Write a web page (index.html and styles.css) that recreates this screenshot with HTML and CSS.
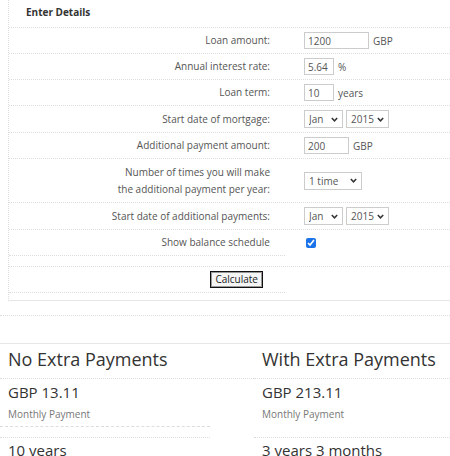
FILE: index.html
```html
<!DOCTYPE html>
<html>
<head>
<meta charset="utf-8">
<link rel="stylesheet" href="styles.css">
</head>
<body>
<div class="form-box">
  <div class="form-title">Enter Details</div>
  <div class="row">
    <div class="label">Loan amount:</div>
    <div class="field"><input class="txt w64" value="1200"><span class="unit">GBP</span></div>
  </div>
  <div class="row">
    <div class="label">Annual interest rate:</div>
    <div class="field"><input class="txt w30" value="5.64"><span class="unit">%</span></div>
  </div>
  <div class="row">
    <div class="label">Loan term:</div>
    <div class="field"><input class="txt w30" value="10"><span class="unit">years</span></div>
  </div>
  <div class="row r27">
    <div class="label">Start date of mortgage:</div>
    <div class="field"><select class="sel w39"><option>Jan</option></select><select class="sel w43"><option>2015</option></select></div>
  </div>
  <div class="row">
    <div class="label">Additional payment amount:</div>
    <div class="field"><input class="txt w45" value="200"><span class="unit">GBP</span></div>
  </div>
  <div class="row tall">
    <div class="label">Number of times you will make<br>the additional payment per year:</div>
    <div class="field"><select class="sel w58"><option>1 time</option></select></div>
  </div>
  <div class="row r27">
    <div class="label">Start date of additional payments:</div>
    <div class="field"><select class="sel w39"><option>Jan</option></select><select class="sel w43"><option>2015</option></select></div>
  </div>
  <div class="row noline">
    <div class="label lined">Show balance schedule</div>
    <div class="field"><input type="checkbox" class="chk" checked></div>
  </div>
  <div class="spacer"></div>
  <div class="row noline btnrow">
    <div class="label lined"><button class="calc">Calculate</button></div>
    <div class="field"></div>
  </div>
</div>
<div class="gap-line"></div>
<div class="results">
  <div class="col left">
    <h2 class="res-title">No Extra Payments</h2>
    <div class="res-block">
      <div class="amount">GBP 13.11</div>
      <div class="caption">Monthly Payment</div>
    </div>
    <div class="short-line"></div>
    <div class="amount term">10 years</div>
  </div>
  <div class="col right">
    <h2 class="res-title">With Extra Payments</h2>
    <div class="res-block">
      <div class="amount">GBP 213.11</div>
      <div class="caption">Monthly Payment</div>
    </div>
    <div class="short-line"></div>
    <div class="amount term">3 years 3 months</div>
  </div>
</div>
</body>
</html>
```

FILE: styles.css
```css
html, body {
  margin: 0;
  padding: 0;
  background: #fff;
  overflow: hidden;
}
body {
  font-family: "Open Sans", "Liberation Sans", sans-serif;
  color: #555;
  font-size: 10px;
}
.form-box {
  margin-left: 8px;
  border-left: 1px dotted #ddd;
  border-bottom: 1px solid #e6e6e6;
  height: 301px;
  box-sizing: border-box;
}
.form-title {
  height: 28px;
  box-sizing: border-box;
  border-bottom: 1px dotted #ddd;
  padding-left: 17px;
  font-weight: 700;
  font-size: 10px;
  color: #333;
  line-height: 25px;
}
.row {
  display: flex;
  height: 26px;
  box-sizing: border-box;
  border-bottom: 1px dotted #ddd;
}
.row.r27 { height: 27px; }
.row.tall { height: 44px; }
.row.noline { border-bottom: none; }
.label {
  width: 276px;
  flex: none;
  box-sizing: border-box;
  padding-right: 15px;
  text-align: right;
  display: flex;
  align-items: center;
  justify-content: flex-end;
  line-height: 17px;
}
.label.lined { border-bottom: 1px dotted #ddd; }
.field {
  display: flex;
  align-items: center;
  padding-left: 19px;
  gap: 3px;
}
.txt {
  height: 17px;
  box-sizing: border-box;
  border: 1px solid #ccc;
  font: inherit;
  color: #555;
  padding: 0 3px;
  margin: 0;
  outline: none;
}
.w64 { width: 65px; }
.w30 { width: 30px; }
.w45 { width: 45px; }
.w39 { width: 39px; }
.w43 { width: 43px; }
.w58 { width: 58px; }
.unit { margin-left: 1px; }
.sel {
  appearance: none;
  -webkit-appearance: none;
  height: 18px;
  box-sizing: border-box;
  border: 1px solid #ccc;
  border-radius: 0;
  font: inherit;
  color: #555;
  padding: 0 0 0 4px;
  margin: 0;
  background: #fff url("data:image/svg+xml;utf8,<svg xmlns='http://www.w3.org/2000/svg' width='7' height='5'><path d='M0.8 1 L3.5 3.8 L6.2 1' fill='none' stroke='%23333' stroke-width='1.5'/></svg>") no-repeat right 4px center;
}
.chk {
  width: 10px;
  height: 10px;
  margin: 0 0 0 2px;
  accent-color: #1a73e8;
}
.spacer {
  height: 11px;
  box-sizing: border-box;
  border-bottom: 1px dotted #ddd;
}
.btnrow { height: 26px; }
.btnrow .label { padding-right: 22px; }
.calc {
  font: inherit;
  color: #222;
  height: 17px;
  padding: 0 4px;
  line-height: 13px;
  background: #f5f5f5;
  border: 1px solid #111;
  box-shadow: inset 0 0 0 1px #999;
  border-radius: 0;
}
.gap-line {
  height: 14px;
  border-bottom: 1px dotted #ddd;
}
.results {
  margin-top: 27px;
  border-top: 1px solid #e6e6e6;
  display: grid;
  grid-template-columns: 254px 1fr;
}
.res-title {
  margin: 0;
  font-weight: 400;
  font-size: 18px;
  color: #333;
  height: 35px;
  line-height: 30px;
  box-sizing: border-box;
  border-bottom: 1px dotted #ddd;
  padding-left: 8px;
}
.res-block {
  height: 47px;
  padding: 3px 0 0 8px;
  box-sizing: border-box;
}
.amount {
  font-size: 15px;
  color: #333;
  line-height: 20px;
}
.caption {
  font-size: 10px;
  color: #777;
  margin-top: 6px;
  line-height: 12px;
}
.short-line {
  height: 10px;
  border-top: 1px dashed #ddd;
  border-bottom: 1px dotted #ddd;
}
.left .short-line {
  width: 210px;
}
.right .short-line {
  border-top: none;
  height: 11px;
}
.term { padding: 2px 0 0 8px; }
```
